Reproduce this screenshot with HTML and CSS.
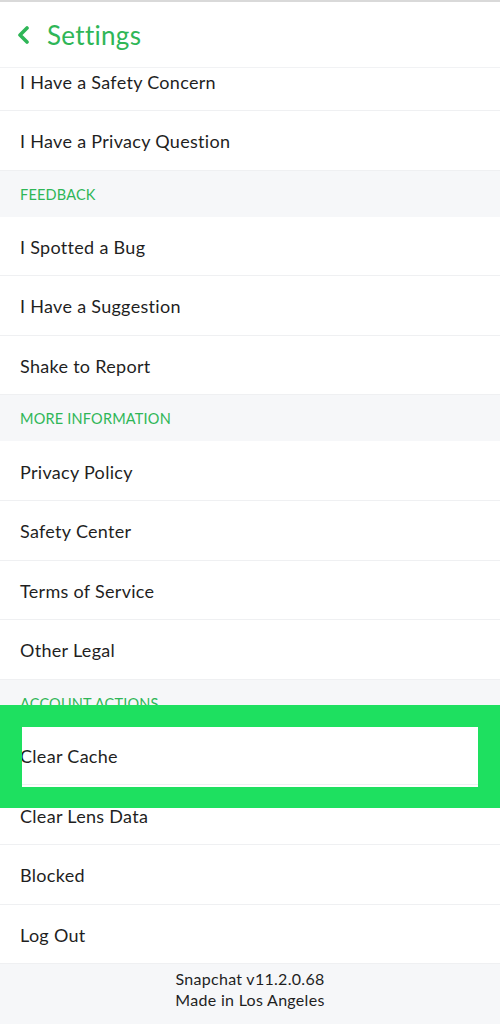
FILE: index.html
```html
<!DOCTYPE html>
<html lang="en">
<head>
  <meta charset="UTF-8">
  <meta name="viewport" content="width=device-width, initial-scale=1.0">
  <title>Settings</title>
  <link rel="stylesheet" href="styles.css">
</head>
<body>
  <div class="screen">
    <header class="top-bar">
      <svg class="back" width="14" height="18" viewBox="0 0 14 18">
        <path d="M11 2 L4 9 L11 16" fill="none" stroke="#2fb657" stroke-width="3.6" stroke-linecap="round" stroke-linejoin="round"/>
      </svg>
      <h1 class="title">Settings</h1>
    </header>

    <div class="list">
      <div class="row first">I Have a Safety Concern</div>
      <div class="row">I Have a Privacy Question</div>

      <div class="section">FEEDBACK</div>
      <div class="row">I Spotted a Bug</div>
      <div class="row">I Have a Suggestion</div>
      <div class="row">Shake to Report</div>

      <div class="section">MORE INFORMATION</div>
      <div class="row">Privacy Policy</div>
      <div class="row">Safety Center</div>
      <div class="row">Terms of Service</div>
      <div class="row">Other Legal</div>

      <div class="section">ACCOUNT ACTIONS</div>
      <div class="row">Clear Cache</div>
      <div class="row">Clear Lens Data</div>
      <div class="row">Blocked</div>
      <div class="row">Log Out</div>

      <footer class="footer">
        <div>Snapchat v11.2.0.68</div>
        <div>Made in Los Angeles</div>
      </footer>
    </div>

    <!-- highlight drawn over the Clear Cache row -->
    <div class="highlight"></div>
  </div>
</body>
</html>
```

FILE: styles.css
```css
* {
  box-sizing: border-box;
}

body {
  margin: 0;
  background-color: #ffffff;
  font-family: Lato, "Noto Sans", sans-serif;
  color: #1f1f1f;
}

.screen {
  position: relative;
  width: 500px;
  height: 1024px;
  overflow: hidden;
  border-top: 2px solid #d9d9d9;
}

.top-bar {
  position: relative;
  z-index: 2;
  display: flex;
  align-items: center;
  height: 66px;
  padding-left: 16px;
  gap: 17px;
  background-color: #ffffff;
  border-bottom: 1px solid #f1f2f4;
}

.title {
  margin: 0;
  font-size: 26px;
  font-weight: 400;
  color: #2fb657;
  letter-spacing: 0.3px;
}

.list {
  display: flex;
  flex-direction: column;
}

.row {
  display: flex;
  align-items: center;
  height: 59.6px;
  flex-shrink: 0;
  padding-left: 20px;
  padding-top: 2px;
  font-size: 18px;
  letter-spacing: 0.3px;
  border-bottom: 1px solid #eff0f2;
}

.row.first {
  height: 60px;
  margin-top: -17px;
  padding-top: 3px;
}

.section {
  display: flex;
  align-items: center;
  height: 46px;
  flex-shrink: 0;
  padding-left: 20px;
  padding-top: 1px;
  font-size: 14.5px;
  letter-spacing: 0.2px;
  color: #2fb657;
  background-color: #f6f7f9;
}

.footer {
  display: flex;
  flex-direction: column;
  align-items: center;
  height: 62px;
  padding-top: 4px;
  font-size: 16px;
  line-height: 21px;
  letter-spacing: 0.3px;
  background-color: #f6f7f9;
}

.highlight {
  position: absolute;
  left: 0;
  top: 703px;
  width: 500px;
  height: 103px;
  border: 22px solid #1ee060;
  border-bottom-width: 21px;
}
```
